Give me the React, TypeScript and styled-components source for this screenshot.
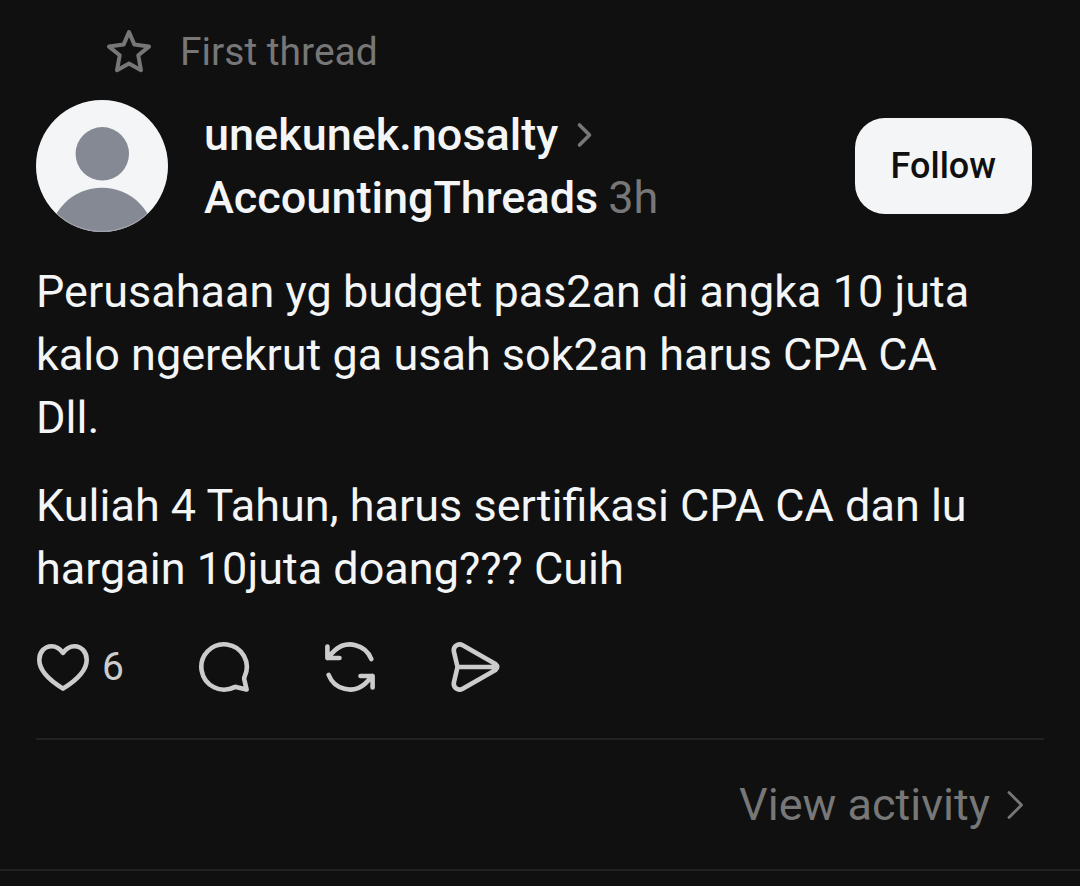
import React from "react";
import styled, { createGlobalStyle } from "styled-components";

const GlobalStyle = createGlobalStyle`
  * { box-sizing: border-box; }
  body {
    margin: 0;
    background: #101010;
    color: #f3f5f7;
    font-family: Roboto, "Liberation Sans", sans-serif;
  }
`;

const Thread = styled.article`
  display: flex;
  flex-direction: column;
  padding: 24px 36px 0;
  border-bottom: 2px solid #222222;
`;

const Badge = styled.div`
  display: flex;
  align-items: center;
  gap: 27px;
  height: 56px;
  padding-left: 69px;
  color: #777777;
  font-size: 39px;
  line-height: 56px;
`;

const Header = styled.header`
  display: flex;
  align-items: center;
  gap: 36px;
  margin-top: 20px;
  padding-right: 12px;
`;

const Avatar = styled.svg`
  flex: none;
  display: block;
`;

const Names = styled.div`
  flex: 1;
  min-width: 0;
  font-size: 45px;
  line-height: 63px;
`;

const NameLine = styled.div`
  display: flex;
  align-items: center;
  gap: 10px;
`;

const NameLink = styled.a`
  color: #f3f5f7;
  font-weight: 500;
  text-decoration: none;
`;

const Time = styled.time`
  color: #777777;
`;

const FollowButton = styled.button`
  flex: none;
  height: 96px;
  padding: 0 36px;
  border: 0;
  border-radius: 30px;
  background: #f3f5f7;
  color: #101010;
  font: 500 36px Roboto, "Liberation Sans", sans-serif;
  cursor: pointer;
`;

const Body = styled.div`
  display: flex;
  flex-direction: column;
  gap: 25px;
  margin-top: 28px;
  padding-right: 12px;
  font-size: 45px;
  line-height: 63px;
`;

const Paragraph = styled.p`
  margin: 0;
`;

const Actions = styled.div`
  display: flex;
  align-items: center;
  gap: 74px;
  height: 60px;
  margin-top: 37px;
`;

const ActionButton = styled.button`
  display: flex;
  align-items: center;
  gap: 12px;
  padding: 0;
  border: 0;
  background: none;
  color: #cccccc;
  font: 400 39px Roboto, "Liberation Sans", sans-serif;
  cursor: pointer;
`;

const Footer = styled.footer`
  display: flex;
  justify-content: flex-end;
  margin-top: 41px;
  padding: 33px 18px 32px 0;
  border-top: 2px solid #222222;
`;

const ActivityLink = styled.a`
  display: flex;
  align-items: center;
  gap: 16px;
  color: #777777;
  font-size: 45px;
  line-height: 64px;
  text-decoration: none;
`;

const Stroke = styled.svg`
  flex: none;
  display: block;
  fill: none;
  stroke: currentColor;
  stroke-linecap: round;
  stroke-linejoin: round;
`;

const NameChevron = styled(Stroke)`
  margin-left: 8px;
  color: #777777;
`;

export default function App() {
  return (
    <>
      <GlobalStyle />
      <Thread>
        <Badge>
          <Stroke width="48" height="48" viewBox="0 0 48 48" strokeWidth="4" aria-hidden="true">
            <path d="M24 4 L29.4 16.6 L44 18.6 L33.3 27.3 L36 42.2 L24 35.6 L12 42.2 L14.7 27.3 L4 18.6 L18.6 16.6 Z" />
          </Stroke>
          <span>First thread</span>
        </Badge>

        <Header>
          <Avatar width="132" height="132" viewBox="0 0 132 132" role="img" aria-label="Profile picture">
            <defs>
              <clipPath id="avatar-clip">
                <circle cx="66" cy="66" r="66" />
              </clipPath>
            </defs>
            <g clipPath="url(#avatar-clip)">
              <rect width="132" height="132" fill="#f3f5f7" />
              <circle cx="66.3" cy="53.8" r="26.7" fill="#858993" />
              <circle cx="66" cy="141" r="53.2" fill="#858993" />
              <circle cx="66" cy="66" r="65.5" fill="none" stroke="#f3f5f7" strokeOpacity="0.25" />
            </g>
          </Avatar>
          <Names>
            <NameLine>
              <NameLink href="#profile">unekunek.nosalty</NameLink>
              <NameChevron width="18" height="26" viewBox="0 0 18 26" strokeWidth="3.6" aria-hidden="true">
                <path d="M3.5 3 L13.5 13 L3.5 23" />
              </NameChevron>
            </NameLine>
            <NameLine>
              <NameLink href="#topic">AccountingThreads</NameLink>
              <Time>3h</Time>
            </NameLine>
          </Names>
          <FollowButton type="button">Follow</FollowButton>
        </Header>

        <Body>
          <Paragraph>
            Perusahaan yg budget pas2an di angka 10 juta kalo ngerekrut ga usah sok2an harus CPA CA
            <br />
            Dll.
          </Paragraph>
          <Paragraph>
            Kuliah 4 Tahun, harus sertifikasi CPA CA dan lu hargain 10juta doang??? Cuih
          </Paragraph>
        </Body>

        <Actions>
          <ActionButton type="button" aria-label="Like, 6 likes">
            <Stroke width="54" height="52" viewBox="0 0 54 52" strokeWidth="4.6" strokeLinejoin="miter">
              <path d="M27 11.8 C24 7.6 20 5.2 15.5 5.2 C8.5 5.2 3.3 11.2 3.3 18.8 C3.3 31 17 41.5 27 47.6 C37 41.5 50.7 31 50.7 18.8 C50.7 11.2 45.5 5.2 38.5 5.2 C34 5.2 30 7.6 27 11.8 Z" />
            </Stroke>
            <span>6</span>
          </ActionButton>
          <ActionButton type="button" aria-label="Reply">
            <Stroke width="52" height="52" viewBox="0 0 52 52" strokeWidth="4.6">
              <path d="M36.5 46.1 A22.7 22.7 0 1 1 46.7 35.4 Q46 37 46.3 38.5 L48.6 48.6 L39 46.2 Q37.5 45.7 36.5 46.1 Z" />
            </Stroke>
          </ActionButton>
          <ActionButton type="button" aria-label="Repost">
            <Stroke width="52" height="52" viewBox="0 0 52 52" strokeWidth="4.6">
              <path d="M47.3 18 A22.7 22.7 0 0 0 11 9.3 Q8 12 3.6 17 M3.4 5.5 V17 H15.5 M4.7 34 A22.7 22.7 0 0 0 41 42.7 Q44 40 48.4 35 M36.5 35 H48.6 V46.5" />
            </Stroke>
          </ActionButton>
          <ActionButton type="button" aria-label="Share">
            <Stroke width="52" height="52" viewBox="0 0 52 52" strokeWidth="4.6">
              <path d="M7.5 26 L4 11 C2.7 5.5 8 1.7 12.7 4.3 L45.5 23 Q49 26 45.5 29 L12.7 47.7 C8 50.3 2.7 46.5 4 41 Z M7.5 26 H46.5" />
            </Stroke>
          </ActionButton>
        </Actions>

        <Footer>
          <ActivityLink href="#activity">
            View activity
            <Stroke width="20" height="32" viewBox="0 0 20 32" strokeWidth="2.8" aria-hidden="true">
              <path d="M3 3.5 L15.5 16 L3 28.5" />
            </Stroke>
          </ActivityLink>
        </Footer>
      </Thread>
    </>
  );
}
